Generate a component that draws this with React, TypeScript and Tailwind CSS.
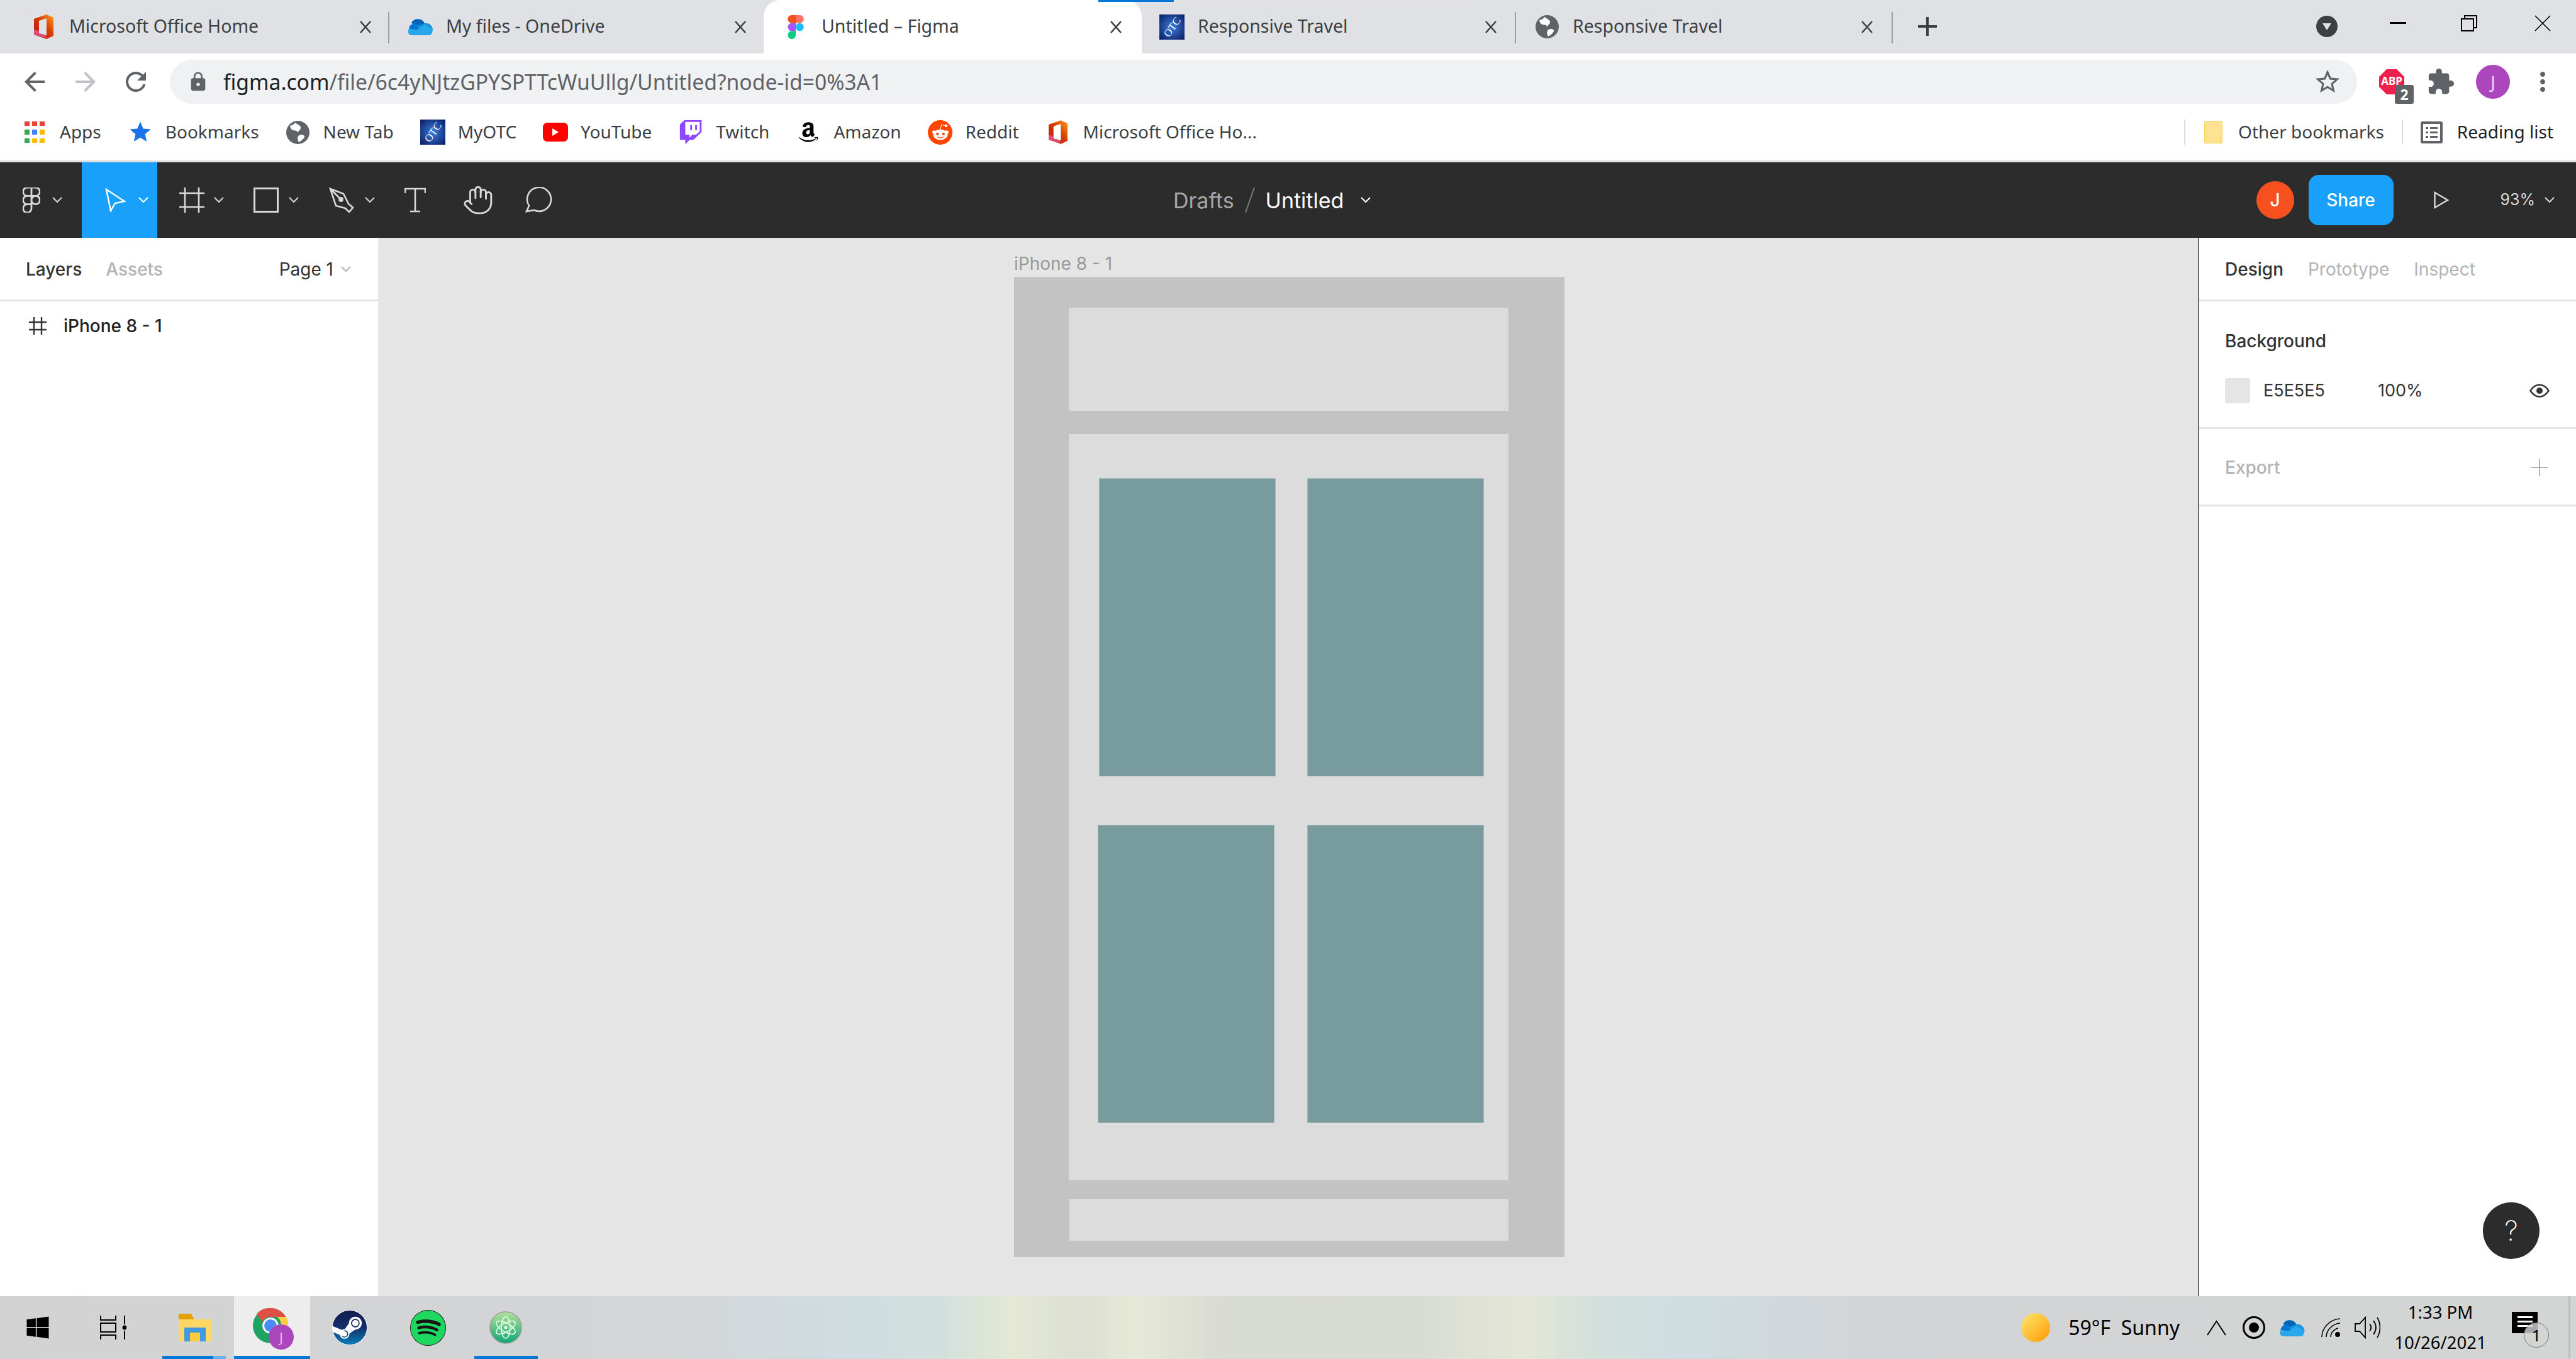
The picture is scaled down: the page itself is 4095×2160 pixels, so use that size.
import { Hand } from "lucide-react"
import { FaAmazon, FaRedditAlien, FaSpotify, FaSteam, FaTwitch, FaWindows } from "react-icons/fa"
import { MdArrowBack, MdArrowForward, MdExtension, MdLock, MdMoreVert, MdRefresh, MdStar, MdStarBorder } from "react-icons/md"

const Chevron = ({ className = "" }: { className?: string }) => (
  <svg viewBox="0 0 16 10" className={`h-[10px] w-[16px] shrink-0 ${className}`} fill="none" stroke="currentColor" strokeWidth="2">
    <path d="M1 1l7 7 7-7" />
  </svg>
)

const CloseX = () => (
  <svg viewBox="0 0 20 20" className="h-[20px] w-[24px] shrink-0 text-[#3c4043]" fill="none" stroke="currentColor" strokeWidth="2.6">
    <path d="M2 1l16 18M18 1L2 19" />
  </svg>
)

const OfficeIcon = ({ className = "" }: { className?: string }) => (
  <svg viewBox="0 0 31 39" className={className}>
    <defs>
      <linearGradient id="officeFill" x1="0" y1="1" x2="1" y2="0">
        <stop offset="0" stopColor="#b0102a" />
        <stop offset="0.55" stopColor="#d83b01" />
        <stop offset="1" stopColor="#ffa01e" />
      </linearGradient>
    </defs>
    <path fillRule="evenodd" fill="url(#officeFill)" d="M20 0l11 5v29l-11 5L0 32V7zM8 10v20l12 3V6z" />
    <path fill="#e8609a" d="M0 24l8 2v4l12 3-2 4L0 32z" opacity="0.7" />
  </svg>
)

const OneDriveIcon = ({ className = "" }: { className?: string }) => (
  <svg viewBox="0 0 40 27" className={className}>
    <path fill="#0364b8" d="M16 18L27 8A12 12 0 0 0 6 7z" />
    <path fill="#0078d4" d="M14 9A9 9 0 0 0 2 17l12 2 8-6z" />
    <path fill="#1490df" d="M27 8c7-1 12 4 13 10l-16 3-10-8z" />
    <path fill="#28a8ea" d="M2 17c-3 4-1 10 5 10h27c3 0 5-2 6-9L27 10 14 19z" />
  </svg>
)

const FigmaIcon = ({ className = "" }: { className?: string }) => (
  <svg viewBox="0 0 38 57" className={className}>
    <path fill="#1abcfe" d="M19 28.5a9.5 9.5 0 1 1 19 0 9.5 9.5 0 0 1-19 0z" />
    <path fill="#0acf83" d="M0 47.5A9.5 9.5 0 0 1 9.5 38H19v9.5a9.5 9.5 0 1 1-19 0z" />
    <path fill="#ff7262" d="M19 0v19h9.5a9.5 9.5 0 1 0 0-19H19z" />
    <path fill="#f24e1e" d="M0 9.5A9.5 9.5 0 0 0 9.5 19H19V0H9.5A9.5 9.5 0 0 0 0 9.5z" />
    <path fill="#a259ff" d="M0 28.5A9.5 9.5 0 0 0 9.5 38H19V19H9.5A9.5 9.5 0 0 0 0 28.5z" />
  </svg>
)

const GlobeIcon = ({ className = "" }: { className?: string }) => (
  <svg viewBox="0 0 24 24" className={className}>
    <circle cx="12" cy="12" r="12" fill="#5f6368" />
    <path fill="#fff" d="M9 2c-1 2-3 3-5 3 0 3 2 5 5 5 2 0 3 1 3 3 0-3 3-3 3-6 0-2-3-3-6-5zM13 15c2-1 5-1 6 1-1 3-4 5-6 6-1-2-2-5 0-7z" />
  </svg>
)

const OtcIcon = ({ className = "" }: { className?: string }) => (
  <svg viewBox="0 0 40 40" className={className}>
    <defs>
      <radialGradient id="otcFill" cx="0.5" cy="0.5" r="0.7">
        <stop offset="0" stopColor="#3f7fe0" />
        <stop offset="1" stopColor="#061a5e" />
      </radialGradient>
    </defs>
    <rect width="40" height="40" fill="url(#otcFill)" />
    <text x="20" y="26" textAnchor="middle" fontSize="17" fontFamily="Liberation Serif, serif" fill="#fff" transform="rotate(-55 20 20)">OTC</text>
  </svg>
)

const AppsIcon = () => (
  <div className="grid h-[34px] w-[32px] grid-cols-3 gap-x-[4px] gap-y-[6px]">
    <div className="bg-[#ea4335]" />
    <div className="bg-[#ea4335]" />
    <div className="bg-[#ea4335]" />
    <div className="bg-[#34a853]" />
    <div className="bg-[#4285f4]" />
    <div className="bg-[#fbbc05]" />
    <div className="bg-[#34a853]" />
    <div className="bg-[#fbbc05]" />
    <div className="bg-[#fbbc05]" />
  </div>
)

const YoutubeIcon = () => (
  <div className="flex h-[30px] w-[40px] items-center justify-center rounded-[7px] bg-[#ff0000]">
    <div className="h-0 w-0 border-y-[6px] border-l-[10px] border-y-transparent border-l-white" />
  </div>
)

const RedditIcon = () => (
  <div className="flex size-[39px] items-center justify-center rounded-full bg-[#ff4500]">
    <FaRedditAlien className="size-[28px] text-white" />
  </div>
)

const FolderIcon = () => (
  <svg viewBox="0 0 29 36" className="h-[36px] w-[29px]">
    <rect x="0.5" y="0.5" width="28" height="35" rx="2" fill="#fde293" stroke="#f9d24d" />
    <path d="M26 24h3v11h-3z" fill="#fde293" stroke="#f9d24d" />
  </svg>
)

const ReadingIcon = () => (
  <svg viewBox="0 0 35 35" className="size-[35px]" fill="#5f6368">
    <path fillRule="evenodd" d="M3 0h29a3 3 0 0 1 3 3v29a3 3 0 0 1-3 3H3a3 3 0 0 1-3-3V3a3 3 0 0 1 3-3zm1 4v27h27V4z" />
    <path d="M8 9h4v3H8zM15 9h12v3H15zM8 16h4v3H8zM15 16h12v3H15zM8 23h4v3H8zM15 23h12v3H15z" />
  </svg>
)

const tabs = [
  { title: "Microsoft Office Home", icon: <OfficeIcon className="h-[39px] w-[31px]" />, box: "w-[594px] pl-[24px] pr-[26px]", sep: true },
  { title: "My files - OneDrive", icon: <OneDriveIcon className="h-[27px] w-[40px]" />, box: "w-[595px] pl-[29px] pr-[25px]", sep: false },
  { title: "Untitled – Figma", icon: <FigmaIcon className="h-[38px] w-[26px]" />, box: "w-[601px] pl-[31px] pr-[29px] rounded-t-[26px] bg-white", sep: false },
  { title: "Responsive Travel", icon: <OtcIcon className="size-[40px]" />, box: "w-[595px] pl-[28px] pr-[28px]", sep: true },
  { title: "Responsive Travel", icon: <GlobeIcon className="size-[37px]" />, box: "w-[599px] pl-[29px] pr-[29px]", sep: true },
]

const bookmarks = [
  { label: "Apps", icon: <AppsIcon /> },
  { label: "Bookmarks", icon: <MdStar className="size-[44px] text-[#1a73e8]" /> },
  { label: "New Tab", icon: <GlobeIcon className="size-[37px]" /> },
  { label: "MyOTC", icon: <OtcIcon className="size-[40px]" /> },
  { label: "YouTube", icon: <YoutubeIcon /> },
  { label: "Twitch", icon: <FaTwitch className="size-[38px] text-[#9146ff]" /> },
  { label: "Amazon", icon: <FaAmazon className="size-[36px] text-black" /> },
  { label: "Reddit", icon: <RedditIcon /> },
  { label: "Microsoft Office Ho...", icon: <OfficeIcon className="h-[38px] w-[30px]" /> },
]

function TabStrip() {
  return (
    <div className="relative flex h-[85px] bg-[#dfe1e5] pl-[25px]">
      {tabs.map((t, i) => (
        <div key={i} className={`flex items-center ${t.box} relative`}>
          <div className="flex w-[40px] shrink-0 justify-center">{t.icon}</div>
          <span className="ml-[21px] pb-[2px] text-[28.5px] text-[#3c4043]">{t.title}</span>
          <div className="ml-auto"><CloseX /></div>
          {t.sep && <div className="absolute right-0 top-[19px] h-[50px] w-[2px] bg-[#9aa0a6]" />}
        </div>
      ))}
      <svg viewBox="0 0 30 30" className="ml-[40px] mt-[27px] size-[30px] text-[#3c4043]" fill="none" stroke="currentColor" strokeWidth="4">
        <path d="M15 0v30M0 15h30" />
      </svg>
      <div className="ml-[603px] mt-[25px] flex size-[34px] items-center justify-center rounded-full bg-[#3c4043]">
        <div className="h-0 w-0 border-x-[7px] border-t-[11px] border-x-transparent border-t-[#dfe1e5]" />
      </div>
      <div className="ml-[83px] mt-[35px] h-[3px] w-[26px] bg-black" />
      <svg viewBox="0 0 26 26" className="ml-[87px] mt-[24px] size-[26px]" fill="none" stroke="black" strokeWidth="2">
        <path d="M1 6h19v19H1zM6 6V1h19v19h-5" />
      </svg>
      <svg viewBox="0 0 26 26" className="ml-[91px] mt-[24px] size-[26px]" fill="none" stroke="black" strokeWidth="1.6">
        <path d="M1 1l24 24M25 1L1 25" />
      </svg>
      {/* tab loading bar */}
      <div className="absolute left-[1746px] top-0 h-[3px] w-[603px] bg-[#e3e3e3]">
        <div className="h-full w-[120px] bg-[#0078d7]" />
      </div>
    </div>
  )
}

function AddressRow() {
  return (
    <div className="flex h-[80px] items-center bg-white pt-[10px]">
      <MdArrowBack className="ml-[31px] size-[48px] text-[#5f6368]" />
      <MdArrowForward className="ml-[33px] size-[48px] text-[#bdc1c6]" />
      <MdRefresh className="ml-[32px] size-[48px] text-[#5f6368]" />
      <div className="ml-[30px] flex h-[70px] w-[3477px] items-center rounded-full bg-[#eff1f3] pl-[28px] pr-[24px]">
        <MdLock className="size-[34px] text-[#5f6368]" />
        <span className="ml-[23px] text-[33.7px] text-[#5f6368]">
          <span className="text-[#202124]">figma.com</span>/file/6c4yNJtzGPYSPTTcWuUllg/Untitled?node-id=0%3A1
        </span>
        <MdStarBorder className="ml-auto size-[46px] text-[#5f6368]" />
      </div>
      <div className="relative ml-[35px] size-[40px]">
        <svg viewBox="0 0 40 40" className="size-[40px]">
          <path fill="#ef1f4b" d="M12 0h16l12 12v16L28 40H12L0 28V12z" />
        </svg>
        <span className="absolute left-0 top-[7px] w-[40px] text-center text-[17px] font-bold leading-[24px] text-white">ABP</span>
        <span className="absolute left-[25px] top-[25px] flex h-[30px] w-[30px] items-center justify-center rounded-[3px] bg-[#5f6368] text-[23px] font-bold text-white">2</span>
      </div>
      <MdExtension className="ml-[35px] size-[46px] text-[#5f6368]" />
      <div className="ml-[33px] flex size-[54px] items-center justify-center rounded-full bg-[#ac46bc] text-[28px] text-[#f1d9f5]">J</div>
      <MdMoreVert className="ml-[28px] size-[48px] text-[#5f6368]" />
    </div>
  )
}

function BookmarksBar() {
  return (
    <div className="flex h-[90px] items-center border-b-0 bg-white pl-[35px]">
      <div className="flex items-center gap-[42px]">
        {bookmarks.map((b) => (
          <div key={b.label} className="flex items-center gap-[20px]">
            <div className="flex w-[40px] justify-center">{b.icon}</div>
            <span className="pb-[2px] text-[28px] text-[#3c4043]">{b.label}</span>
          </div>
        ))}
      </div>
      <div className="ml-auto flex items-center pr-[36px]">
        <div className="h-[40px] w-[2px] bg-[#dadce0]" />
        <div className="ml-[30px]"><FolderIcon /></div>
        <span className="ml-[25px] pb-[2px] text-[28px] text-[#3c4043]">Other bookmarks</span>
        <div className="ml-[28px] h-[40px] w-[2px] bg-[#dadce0]" />
        <div className="ml-[28px]"><ReadingIcon /></div>
        <span className="ml-[23px] pb-[2px] text-[28px] text-[#202124]">Reading list</span>
      </div>
    </div>
  )
}

function FigmaToolbar() {
  return (
    <div className="box-content flex h-[120px] items-center border-t-[3px] border-[#dcdcdc] bg-[#2c2c2c] font-['Inter',sans-serif] text-[#d9d9d9]">
      {/* left tools */}
      <div className="flex h-full items-center">
        <div className="flex h-full w-[130px] items-center pl-[36px]">
          <svg viewBox="0 0 38 57" className="h-[40px] w-[28px]" fill="none" stroke="currentColor" strokeWidth="4">
            <path d="M19 28.5a9.5 9.5 0 1 1 19 0 9.5 9.5 0 0 1-19 0zM0 47.5A9.5 9.5 0 0 1 9.5 38H19v9.5a9.5 9.5 0 1 1-19 0zM19 0v19h9.5a9.5 9.5 0 1 0 0-19H19zM0 9.5A9.5 9.5 0 0 0 9.5 19H19V0H9.5A9.5 9.5 0 0 0 0 9.5zM0 28.5A9.5 9.5 0 0 0 9.5 38H19V19H9.5A9.5 9.5 0 0 0 0 28.5z" />
          </svg>
          <Chevron className="ml-[19px]" />
        </div>
        <div className="flex h-full w-[120px] items-center bg-[#18a0fb] pl-[37px] text-white">
          <svg viewBox="0 0 33 38" className="h-[38px] w-[33px]" fill="none" stroke="currentColor" strokeWidth="2.4">
            <path d="M2 2l29 19-15 3-7 12z" />
          </svg>
          <Chevron className="ml-[20px]" />
        </div>
        <div className="flex h-full w-[120px] items-center pl-[35px]">
          <svg viewBox="0 0 40 40" className="size-[40px]" fill="none" stroke="currentColor" strokeWidth="2.6">
            <path d="M9 0v40M31 0v40M0 9h40M0 31h40" />
          </svg>
          <Chevron className="ml-[15px]" />
        </div>
        <div className="flex h-full w-[120px] items-center pl-[33px]">
          <div className="size-[40px] border-[3px] border-[#d9d9d9]" />
          <Chevron className="ml-[16px]" />
        </div>
        <div className="flex h-full w-[120px] items-center pl-[33px]">
          <svg viewBox="0 0 40 40" className="size-[40px]" fill="none" stroke="currentColor" strokeWidth="2.6">
            <path d="M2 2l21 8 8 16 7 6-6 7-6-6-15-4zM2 2l16 16" />
            <circle cx="19" cy="19" r="2.6" fill="currentColor" />
          </svg>
          <Chevron className="ml-[17px]" />
        </div>
        <div className="flex h-full w-[100px] items-center pl-[33px]">
          <svg viewBox="0 0 34 40" className="h-[40px] w-[34px]" fill="none" stroke="currentColor" strokeWidth="2.6">
            <path d="M1 9V2h32v7M17 2v36M9 38h16" />
          </svg>
        </div>
        <div className="flex h-full w-[100px] items-center pl-[25px]">
          <Hand className="size-[50px]" strokeWidth={1.4} />
        </div>
        <div className="flex h-full w-[100px] items-center pl-[25px]">
          <svg viewBox="0 0 44 42" className="h-[42px] w-[44px]" fill="none" stroke="currentColor" strokeWidth="2.6">
            <path d="M2 39l4-9A19 19 0 1 1 14 37z" />
          </svg>
        </div>
      </div>
      {/* file name */}
      <div className="ml-[955px] flex items-center text-[34px]">
        <span className="text-[#a6a6a6]">Drafts</span>
        <svg viewBox="0 0 16 40" className="ml-[17px] h-[40px] w-[16px] text-[#7a7a7a]" fill="none" stroke="currentColor" strokeWidth="2">
          <path d="M15 0L1 40" />
        </svg>
        <span className="ml-[17px] text-white">Untitled</span>
        <Chevron className="ml-[27px] text-white" />
      </div>
      {/* right side */}
      <div className="ml-auto flex items-center pr-[34px]">
        <div className="flex size-[60px] items-center justify-center rounded-full bg-[#f5501e] text-[28px] font-medium text-white">J</div>
        <div className="ml-[23px] flex h-[80px] w-[135px] items-center justify-center rounded-[16px] bg-[#18a0fb] text-[28px] font-medium text-white">Share</div>
        <svg viewBox="0 0 24 28" className="ml-[64px] h-[28px] w-[24px]" fill="none" stroke="currentColor" strokeWidth="2.4">
          <path d="M1.5 2v24L22 14z" />
        </svg>
        <span className="ml-[82px] text-[25px]">93%</span>
        <Chevron className="ml-[15px]" />
      </div>
    </div>
  )
}

function LayersPanel() {
  return (
    <div className="w-[601px] shrink-0 bg-white font-['Inter',sans-serif] text-[28px]">
      <div className="flex h-[101px] items-center border-b-[3px] border-[#e5e5e5] pl-[41px] pr-[43px] pt-[2px]">
        <span className="font-medium text-[#333]">Layers</span>
        <span className="ml-[38px] font-medium text-[#b3b3b3]">Assets</span>
        <span className="ml-auto text-[#333]">Page 1</span>
        <Chevron className="ml-[12px] text-[#b3b3b3]" />
      </div>
      <div className="flex h-[78px] items-center pl-[46px]">
        <svg viewBox="0 0 28 28" className="size-[28px] text-[#333]" fill="none" stroke="currentColor" strokeWidth="2.4">
          <path d="M8 0v28M20 0v28M0 8h28M0 20h28" />
        </svg>
        <span className="ml-[27px] font-medium text-[#222]">iPhone 8 - 1</span>
      </div>
    </div>
  )
}

function Canvas() {
  const card = "h-[474px] w-[281px] border border-[#a5b8b8] bg-[#789c9d]"
  return (
    <div className="min-w-0 flex-1 bg-[#e5e5e5] pl-[1011px] font-['Inter',sans-serif]">
      <div className="flex h-[62px] items-end pb-[3px] text-[28px] leading-[36px] text-[#999]">iPhone 8 - 1</div>
      <div className="h-[1558px] w-[875px] bg-[#c3c3c3] pl-[87px] pt-[49px]">
        <div className="h-[164px] w-[699px] bg-[#dcdcdc]" />
        <div className="mt-[37px] h-[1186px] w-[699px] bg-[#dcdcdc] pt-[70px]">
          <div className="ml-[48px] flex gap-[50px]">
            <div className={card} />
            <div className={card} />
          </div>
          <div className="ml-[46px] mt-[77px] flex gap-[52px]">
            <div className={card} />
            <div className={card} />
          </div>
        </div>
        <div className="ml-[1px] mt-[30px] h-[66px] w-[698px] bg-[#dcdcdc]" />
      </div>
    </div>
  )
}

function DesignPanel() {
  return (
    <div className="relative w-[601px] shrink-0 border-l-[2px] border-[#6b6b6b] bg-white font-['Inter',sans-serif] text-[28px]">
      <div className="flex h-[101px] items-center gap-[39px] border-b-[3px] border-[#e5e5e5] pl-[41px] pt-[2px]">
        <span className="font-medium text-[#333]">Design</span>
        <span className="text-[#b3b3b3]">Prototype</span>
        <span className="text-[#b3b3b3]">Inspect</span>
      </div>
      <div className="h-[203px] border-b-[3px] border-[#e5e5e5] pl-[41px]">
        <div className="flex h-[85px] items-end font-medium leading-[44px] text-[#333]">Background</div>
        <div className="mt-[37px] flex h-[40px] items-center text-[27px] text-[#333]">
          <div className="size-[40px] rounded-[3px] bg-[#e5e5e5]" />
          <span className="ml-[21px]">E5E5E5</span>
          <span className="ml-[84px]">100%</span>
          <svg viewBox="0 0 32 22" className="ml-[169px] h-[22px] w-[32px]" fill="none" stroke="currentColor" strokeWidth="2.4">
            <path d="M1.5 11C6 4 11 1.5 16 1.5S26 4 30.5 11C26 18 21 20.5 16 20.5S6 18 1.5 11z" />
            <circle cx="16" cy="11" r="5" fill="currentColor" stroke="none" />
          </svg>
        </div>
      </div>
      <div className="flex h-[123px] items-center border-b-[3px] border-[#e5e5e5] pl-[41px] pr-[44px] pt-[2px]">
        <span className="font-medium text-[#b3b3b3]">Export</span>
        <svg viewBox="0 0 28 28" className="ml-auto size-[28px] text-[#b3b3b3]" fill="none" stroke="currentColor" strokeWidth="2">
          <path d="M14 0v28M0 14h28" />
        </svg>
      </div>
      <div className="absolute bottom-[59px] right-[58px] flex size-[90px] items-center justify-center rounded-full bg-[#2c2c2c] text-[44px] font-extralight text-white">?</div>
    </div>
  )
}

function Taskbar() {
  return (
    <div className="flex h-[100px] items-stretch bg-[linear-gradient(90deg,#d2d2d2_0px,#d4d5d7_1050px,#cfdde1_1370px,#d2e0dd_1500px,#e4e8d4_1610px,#dcdfd2_1720px,#e7e9d6_1800px,#d8dad4_1950px,#d8dbd3_2250px,#e4e7d6_2420px,#d2dfdb_2540px,#cfdee1_2650px,#d1d6d9_2900px,#d3d4d5_3200px,#d3d5d4_4095px)] text-black">
      <div className="flex w-[120px] items-center justify-center">
        <FaWindows className="size-[40px]" />
      </div>
      <div className="mr-[8px] flex w-[120px] items-center justify-center">
        <svg viewBox="0 0 42 38" className="h-[38px] w-[42px]" fill="none" stroke="black" strokeWidth="2">
          <path d="M1 0v7h24V0M1 12h24v14H1zM1 38v-7h24v7M39 0v14M39 24v14" />
          <circle cx="39" cy="19" r="3.5" fill="black" stroke="none" />
        </svg>
      </div>
      <div className="relative flex w-[124px] items-center justify-center">
        <svg viewBox="0 0 52 44" className="h-[44px] w-[52px]">
          <path fill="#e4a000" d="M0 0h20l4 8v4H0z" />
          <path fill="#ffd764" d="M0 9h52v35H0z" />
          <path fill="#3f9ae0" d="M9 22h34v22H34v-14H18v14H9z" />
          <path fill="#ffc93c" d="M18 30h16v14H18z" />
        </svg>
        <div className="absolute bottom-0 left-[10px] flex h-[5px] w-[101px]">
          <div className="w-[81px] bg-[#0078d7]" />
          <div className="w-[20px] bg-[#6cb2ea]" />
        </div>
      </div>
      <div className="relative flex w-[121px] items-center justify-center bg-[#ededed]">
        <svg viewBox="0 0 48 48" className="mb-[6px] mr-[6px] size-[56px]">
          <circle cx="24" cy="24" r="24" fill="#1da462" />
          <path fill="#dd5144" d="M24 0a24 24 0 0 1 21 12H24a12 12 0 0 0-11 7L5 8A24 24 0 0 1 24 0z" />
          <path fill="#ffcd46" d="M45 12a24 24 0 0 1-21 36l10-17a12 12 0 0 0-1-19z" />
          <circle cx="24" cy="24" r="11" fill="#fff" />
          <circle cx="24" cy="24" r="8.5" fill="#4c8bf5" />
        </svg>
        <div className="absolute left-[55px] top-[45px] flex size-[40px] items-center justify-center rounded-full bg-[#ac46bc] text-[22px] text-[#e6bdec]">J</div>
        <div className="absolute bottom-0 left-0 h-[5px] w-full bg-[#0078d7]" />
      </div>
      <div className="flex w-[125px] items-center justify-center">
        <svg width="0" height="0" className="absolute">
          <defs>
            <linearGradient id="steamFill" x1="0" y1="0" x2="0" y2="1">
              <stop offset="0" stopColor="#111d4e" />
              <stop offset="0.5" stopColor="#12306b" />
              <stop offset="1" stopColor="#0a7db5" />
            </linearGradient>
          </defs>
        </svg>
        <div className="rounded-full bg-white">
          <FaSteam className="size-[56px]" fill="url(#steamFill)" />
        </div>
      </div>
      <div className="flex w-[124px] items-center justify-center">
        <div className="rounded-full bg-[#191414]">
          <FaSpotify className="size-[57px] text-[#1ed760]" />
        </div>
      </div>
      <div className="relative flex w-[124px] items-center justify-center">
        <svg viewBox="0 0 52 52" className="size-[52px]">
          <defs>
            <linearGradient id="atomFill" x1="0" y1="0" x2="0" y2="1">
              <stop offset="0" stopColor="#b5e29a" />
              <stop offset="1" stopColor="#0fa677" />
            </linearGradient>
          </defs>
          <circle cx="26" cy="26" r="25" fill="url(#atomFill)" stroke="#9b9b9b" strokeWidth="1.5" />
          <g fill="none" stroke="#eafbe8" strokeWidth="1.6">
            <ellipse cx="26" cy="26" rx="17" ry="7" transform="rotate(30 26 26)" />
            <ellipse cx="26" cy="26" rx="17" ry="7" transform="rotate(-30 26 26)" />
            <ellipse cx="26" cy="26" rx="17" ry="7" transform="rotate(90 26 26)" />
          </g>
          <circle cx="26" cy="26" r="2.5" fill="#eafbe8" />
        </svg>
        <div className="absolute bottom-0 left-[12px] h-[5px] w-[101px] bg-[#0078d7]" />
      </div>
      {/* system tray */}
      <div className="ml-auto flex items-center pr-[9px]">
        <div className="size-[46px] rounded-full bg-[linear-gradient(135deg,#ffe970,#ff9800)]" />
        <span className="ml-[29px] whitespace-pre text-[32px]">59°F  Sunny</span>
        <svg viewBox="0 0 31 25" className="ml-[43px] h-[25px] w-[31px]" fill="none" stroke="black" strokeWidth="2">
          <path d="M1 24L15.5 2 30 24" />
        </svg>
        <div className="ml-[26px] flex size-[36px] items-center justify-center rounded-full border-[3px] border-black">
          <div className="size-[16px] rounded-full bg-black" />
        </div>
        <OneDriveIcon className="ml-[22px] h-[27px] w-[41px]" />
        <svg viewBox="0 0 31 30" className="ml-[26px] h-[30px] w-[31px]" fill="none" stroke="black" strokeWidth="1.6">
          <path d="M1 30C1 15 14 2 30 1M8 30C8 19 18 9 30 8M15 30c0-7 6-13 12-14" />
          <circle cx="26" cy="26" r="4" fill="black" stroke="none" />
        </svg>
        <svg viewBox="0 0 41 36" className="ml-[22px] h-[36px] w-[41px]" fill="none" stroke="black" strokeWidth="1.8">
          <path d="M1 12h7l9-10v32l-9-10H1zM24 12c3 4 3 8 0 12M30 7c5 7 5 15 0 22M36 2c6 10 6 22 0 32" />
        </svg>
        <div className="ml-[22px] flex w-[147px] flex-col items-center text-[27.5px] leading-[48px]">
          <span>1:33 PM</span>
          <span>10/26/2021</span>
        </div>
        <div className="relative mb-[16px] ml-[40px] h-[34px] w-[41px] bg-black">
          <div className="mx-auto mt-[7px] h-[3px] w-[24px] bg-white" />
          <div className="mx-auto mt-[4px] h-[3px] w-[24px] bg-white" />
          <div className="mx-auto mt-[4px] h-[3px] w-[24px] bg-white" />
          <div className="absolute left-[19px] top-[17px] flex size-[40px] items-center justify-center rounded-full border border-[#777] bg-[#d3d5d4]/80 text-[26px]">1</div>
        </div>
        <div className="ml-[49px] h-full w-[3px] self-stretch bg-[#bdbdbd]" />
      </div>
    </div>
  )
}

export default function App() {
  return (
    <div className="flex h-[2160px] w-[4095px] flex-col overflow-hidden bg-white font-['Noto_Sans',sans-serif]">
      <TabStrip />
      <AddressRow />
      <BookmarksBar />
      <FigmaToolbar />
      <div className="flex min-h-0 flex-1">
        <LayersPanel />
        <Canvas />
        <DesignPanel />
      </div>
      <Taskbar />
    </div>
  )
}
